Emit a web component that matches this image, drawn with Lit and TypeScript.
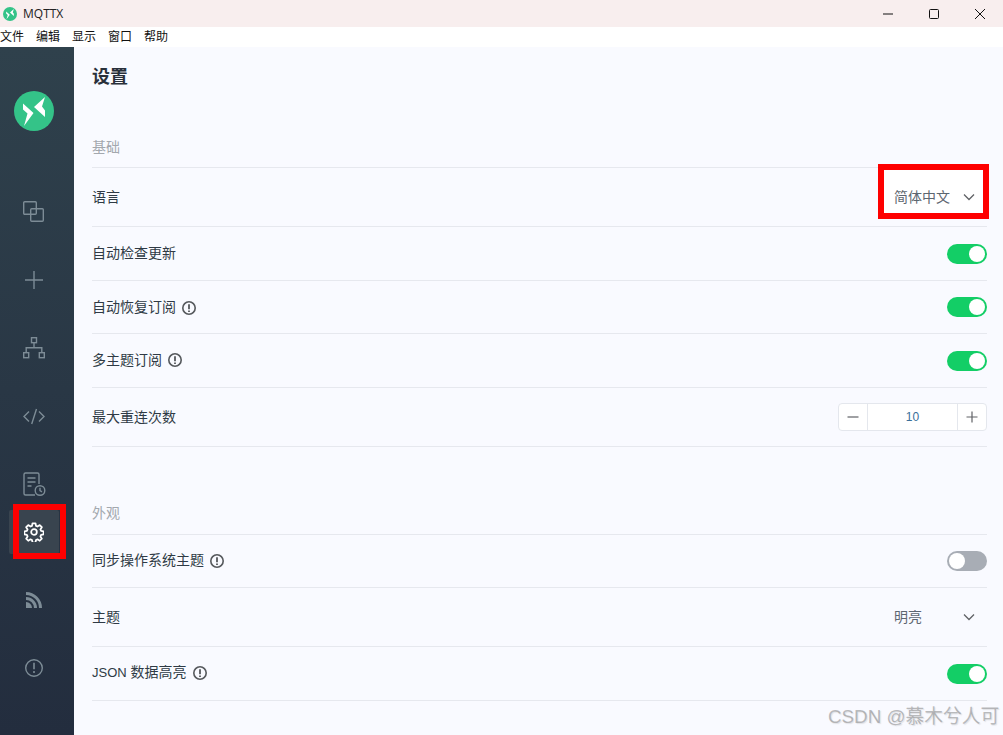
import { LitElement, html, css, svg } from "lit";
import { customElement } from "lit/decorators.js";

const logoShape = svg`<path d="M11 -14 L0 -4 L11 6 L11 -0.500 L8 -4.500 Z" fill="#fff"/><path d="M-11 -7.500 L-0.500 2 L-10 15 L-6.500 2.500 L-11 -1.500 Z" fill="#fff"/>`;

const infoIcon = html`<svg class="info" viewBox="0 0 14 14" width="14" height="14"><circle cx="7" cy="7" r="6.200" fill="none" stroke="#55585c" stroke-width="1.600"/><path d="M7 3.200V8.200M7 9.400v1.600" stroke="#55585c" stroke-width="1.800" fill="none"/></svg>`;

const chevron = html`<svg class="chev" viewBox="0 0 12 12" width="12" height="12"><path d="M1 3.500 6 8.500 11 3.500" fill="none" stroke="#606266" stroke-width="1.300"/></svg>`;

@customElement("app-root")
export class AppRoot extends LitElement {
  static styles = css`
    :host { display: block; width: 1003px; height: 735px; overflow: hidden; position: relative; background: #fff;
      font-family: "Liberation Sans", "Noto Sans CJK SC", sans-serif; }
    * { box-sizing: border-box; }
    .titlebar { height: 27px; background: #f8eeee; display: flex; align-items: center; padding-left: 3px; }
    .titlebar .name { font: 12px "Open Sans", "Noto Sans", sans-serif; color: #222; margin-left: 6px; }
    .wc { margin-left: auto; display: flex; }
    .wc button { width: 46px; height: 27px; border: 0; background: none; padding: 0; display: flex; align-items: center; justify-content: center; }
    .menubar { height: 20px; background: #fff; display: flex; gap: 12px; font-size: 12px; line-height: 20px; color: #111; }
    .main { display: flex; height: 688px; }
    .side { width: 74px; flex: none; background: linear-gradient(180deg, #2f414c 0%, #232d3e 100%); display: flex; flex-direction: column; align-items: center; padding: 44px 6px 0 0; }
    .logo { width: 40px; height: 40px; margin-bottom: 59px; flex: none; }
    .nav { width: 42px; height: 44px; display: flex; align-items: center; justify-content: center; margin-bottom: 24px; border-radius: 2px; flex: none; }
    .nav.tight { margin-bottom: 4px; }
    .nav.on { background: #39444f; width: 50px; }
    .nav svg { display: block; }
    .content { flex: 1; background: #f9faff; padding: 0 16px 0 18px; color: #2c3e50; font-size: 14px; }
    h1 { margin: 0; height: 60px; font-size: 18px; font-weight: 700; line-height: 60px; color: #29303a; }
    .section { height: 60px; display: flex; align-items: flex-end; padding-bottom: 10px; line-height: 20px; color: #a3a8ae; font-size: 14px; }
    .section.next { height: 87px; padding-bottom: 11px; }
    .list { border-top: 1px solid #e6e8ee; }
    .row { display: flex; align-items: center; border-bottom: 1px solid #e6e8ee; height: 54px; color: #2f3a45; }
    .row.tall { height: 59px; }
    .row.h53 { height: 53px; }
    .label { display: flex; align-items: center; gap: 6px; line-height: 20px; padding-bottom: 2px; }
    .row.tall .label, .row.low .label { padding-bottom: 0; }
    .latin { font-size: 13px; }
    .info { display: block; margin-top: 1px; }
    .end { margin-left: auto; }
    .select { margin-left: auto; width: 93px; display: flex; align-items: center; color: #5d6670; position: relative; line-height: 20px; }
    .select.hl { z-index: 1; }
    .chev { position: absolute; right: 12px; top: 4px; }
    .switch { width: 40px; height: 20px; border-radius: 10px; background: #13ce66; position: relative; display: block; }
    .switch::after { content: ""; position: absolute; top: 2px; left: 22px; width: 16px; height: 16px; border-radius: 50%; background: #fff; }
    .switch.off { background: #a8adb5; }
    .switch.off::after { left: 2px; }
    .number { width: 149px; height: 28px; border: 1px solid #e4e7ed; border-radius: 4px; display: flex; align-items: center; background: #fff; margin-left: auto; }
    .number .btn { width: 28px; height: 26px; display: flex; align-items: center; justify-content: center; flex: none; }
    .number .val { flex: 1; height: 26px; border-left: 1px solid #e4e7ed; border-right: 1px solid #e4e7ed; text-align: center; font: 12px/26px "Liberation Sans", sans-serif; color: #3a6f9a; }
    .mark { position: absolute; pointer-events: none; border: 6px solid #fe0000; }
    .mark.lang { left: 878px; top: 164px; width: 111px; height: 55px; background: #fff; }
    .mark.set { left: 13px; top: 504px; width: 53px; height: 55px; }
    .wm { position: absolute; left: 828px; top: 704px; font: 18.800px/26px "Liberation Sans", "Noto Sans CJK SC", sans-serif; color: rgba(125,125,125,.5); text-shadow: 1px 1px 1px rgba(150,150,150,.25); white-space: nowrap; pointer-events: none; }
  `;

  private sw(on = true) {
    return html`<span class="end switch ${on ? "" : "off"}"></span>`;
  }

  render() {
    const ic = "#7d8c96";
    return html`
      <div class="titlebar">
        <svg width="14" height="14" viewBox="-20 -20 40 40"><circle r="20" fill="#34c388"/>${logoShape}</svg>
        <span class="name">MQTTX</span>
        <div class="wc">
          <button aria-label="min"><svg width="12" height="12" viewBox="0 0 12 12"><path d="M1 6h10" stroke="#111" stroke-width="1"/></svg></button>
          <button aria-label="max"><svg width="12" height="12" viewBox="0 0 12 12"><rect x="1.500" y="1.500" width="9" height="9" rx="1" fill="none" stroke="#111"/></svg></button>
          <button aria-label="close"><svg width="12" height="12" viewBox="0 0 12 12"><path d="M1 1l10 10M11 1L1 11" stroke="#111"/></svg></button>
        </div>
      </div>
      <div class="menubar"><span>文件</span><span>编辑</span><span>显示</span><span>窗口</span><span>帮助</span></div>
      <div class="main">
        <nav class="side">
          <svg class="logo" viewBox="-20 -20 40 40"><circle r="20" fill="#34c388"/>${logoShape}</svg>
          <div class="nav"><svg width="24" height="24" viewBox="0 0 24 24" fill="none" stroke="${ic}" stroke-width="1.400"><rect x="1.700" y="1.700" width="12.600" height="12.600" rx="1"/><rect x="8.700" y="8.700" width="12.600" height="12.600" rx="1"/></svg></div>
          <div class="nav"><svg width="20" height="20" viewBox="0 0 20 20" fill="none" stroke="${ic}" stroke-width="1.400"><path d="M10 1v18M1 10h18"/></svg></div>
          <div class="nav"><svg width="24" height="24" viewBox="0 0 24 24" fill="none" stroke="${ic}" stroke-width="1.400"><rect x="9.500" y="1.700" width="5" height="5"/><rect x="1.700" y="16.700" width="5" height="5"/><rect x="17.300" y="16.700" width="5" height="5"/><path d="M12 6.700v5M4.200 16.700v-5h15.600v5"/></svg></div>
          <div class="nav"><svg width="24" height="24" viewBox="0 0 24 24" fill="none" stroke="${ic}" stroke-width="1.400"><path d="M7 7.500 2 12.500l5 5M17 7.500l5 5-5 5M14.500 5 9.700 20"/></svg></div>
          <div class="nav tight"><svg width="24" height="24" viewBox="0 0 24 24" fill="none" stroke="${ic}" stroke-width="1.400"><path d="M13 23H3.500A1.500 1.500 0 0 1 2 21.500v-19A1.500 1.500 0 0 1 3.500 1h12A1.500 1.500 0 0 1 17 2.500V12"/><path d="M5.500 6h8M5.500 10h8M5.500 14h4"/><circle cx="18" cy="18.500" r="4.800"/><path d="M18 15.800v2.900l2 1.200"/></svg></div>
          <div class="nav on"><svg width="20" height="20" viewBox="0 0 24 24" fill="none" stroke="#fff" stroke-width="2.100"><circle cx="12" cy="12" r="3.400"/><path d="M10.200 1.500h3.600l.6 3.100 1.800.8 2.700-1.700 2.500 2.500-1.700 2.700.8 1.800 3 .6v3.600l-3 .6-.8 1.800 1.700 2.700-2.500 2.500-2.700-1.700-1.800.8-.6 3h-3.600l-.6-3-1.800-.8-2.700 1.700-2.500-2.500 1.700-2.700-.8-1.800-3-.6v-3.600l3-.6.8-1.800-1.700-2.700 2.500-2.500 2.700 1.700 1.800-.8z" stroke-linejoin="round"/></svg></div>
          <div class="nav"><svg width="16" height="16" viewBox="0 0 16 16" fill="${ic}"><path d="M0 0A16 16 0 0 1 16 16H13A13 13 0 0 0 0 3zM0 5A11 11 0 0 1 11 16H8A8 8 0 0 0 0 8zM0 10A6 6 0 0 1 6 16H0z"/></svg></div>
          <div class="nav"><svg width="20" height="20" viewBox="0 0 20 20" fill="none" stroke="${ic}" stroke-width="1.400"><circle cx="10" cy="10" r="8.300"/><path d="M10 4.800v6.500M10 13v2" stroke-width="1.600"/></svg></div>
        </nav>
        <main class="content">
          <h1>设置</h1>
          <div class="section">基础</div>
          <div class="list">
            <div class="row tall"><span class="label">语言</span><div class="select hl">简体中文${chevron}</div></div>
            <div class="row"><span class="label">自动检查更新</span>${this.sw()}</div>
            <div class="row h53 low"><span class="label">自动恢复订阅${infoIcon}</span>${this.sw()}</div>
            <div class="row"><span class="label">多主题订阅${infoIcon}</span>${this.sw()}</div>
            <div class="row tall"><span class="label">最大重连次数</span>
              <div class="number">
                <span class="btn"><svg width="12" height="12" viewBox="0 0 12 12"><path d="M.5 6h11" stroke="#606266" stroke-width="1.200"/></svg></span>
                <span class="val">10</span>
                <span class="btn"><svg width="12" height="12" viewBox="0 0 12 12"><path d="M.5 6h11M6 .5v11" stroke="#606266" stroke-width="1.200"/></svg></span>
              </div>
            </div>
          </div>
          <div class="section next">外观</div>
          <div class="list">
            <div class="row h53"><span class="label">同步操作系统主题${infoIcon}</span>${this.sw(false)}</div>
            <div class="row tall"><span class="label">主题</span><div class="select">明亮${chevron}</div></div>
            <div class="row"><span class="label"><span><span class="latin">JSON</span> 数据高亮</span>${infoIcon}</span>${this.sw()}</div>
          </div>
        </main>
      </div>
      <div class="mark lang"></div>
      <div class="mark set"></div>
      <div class="wm">CSDN @慕木兮人可</div>
    `;
  }
}
